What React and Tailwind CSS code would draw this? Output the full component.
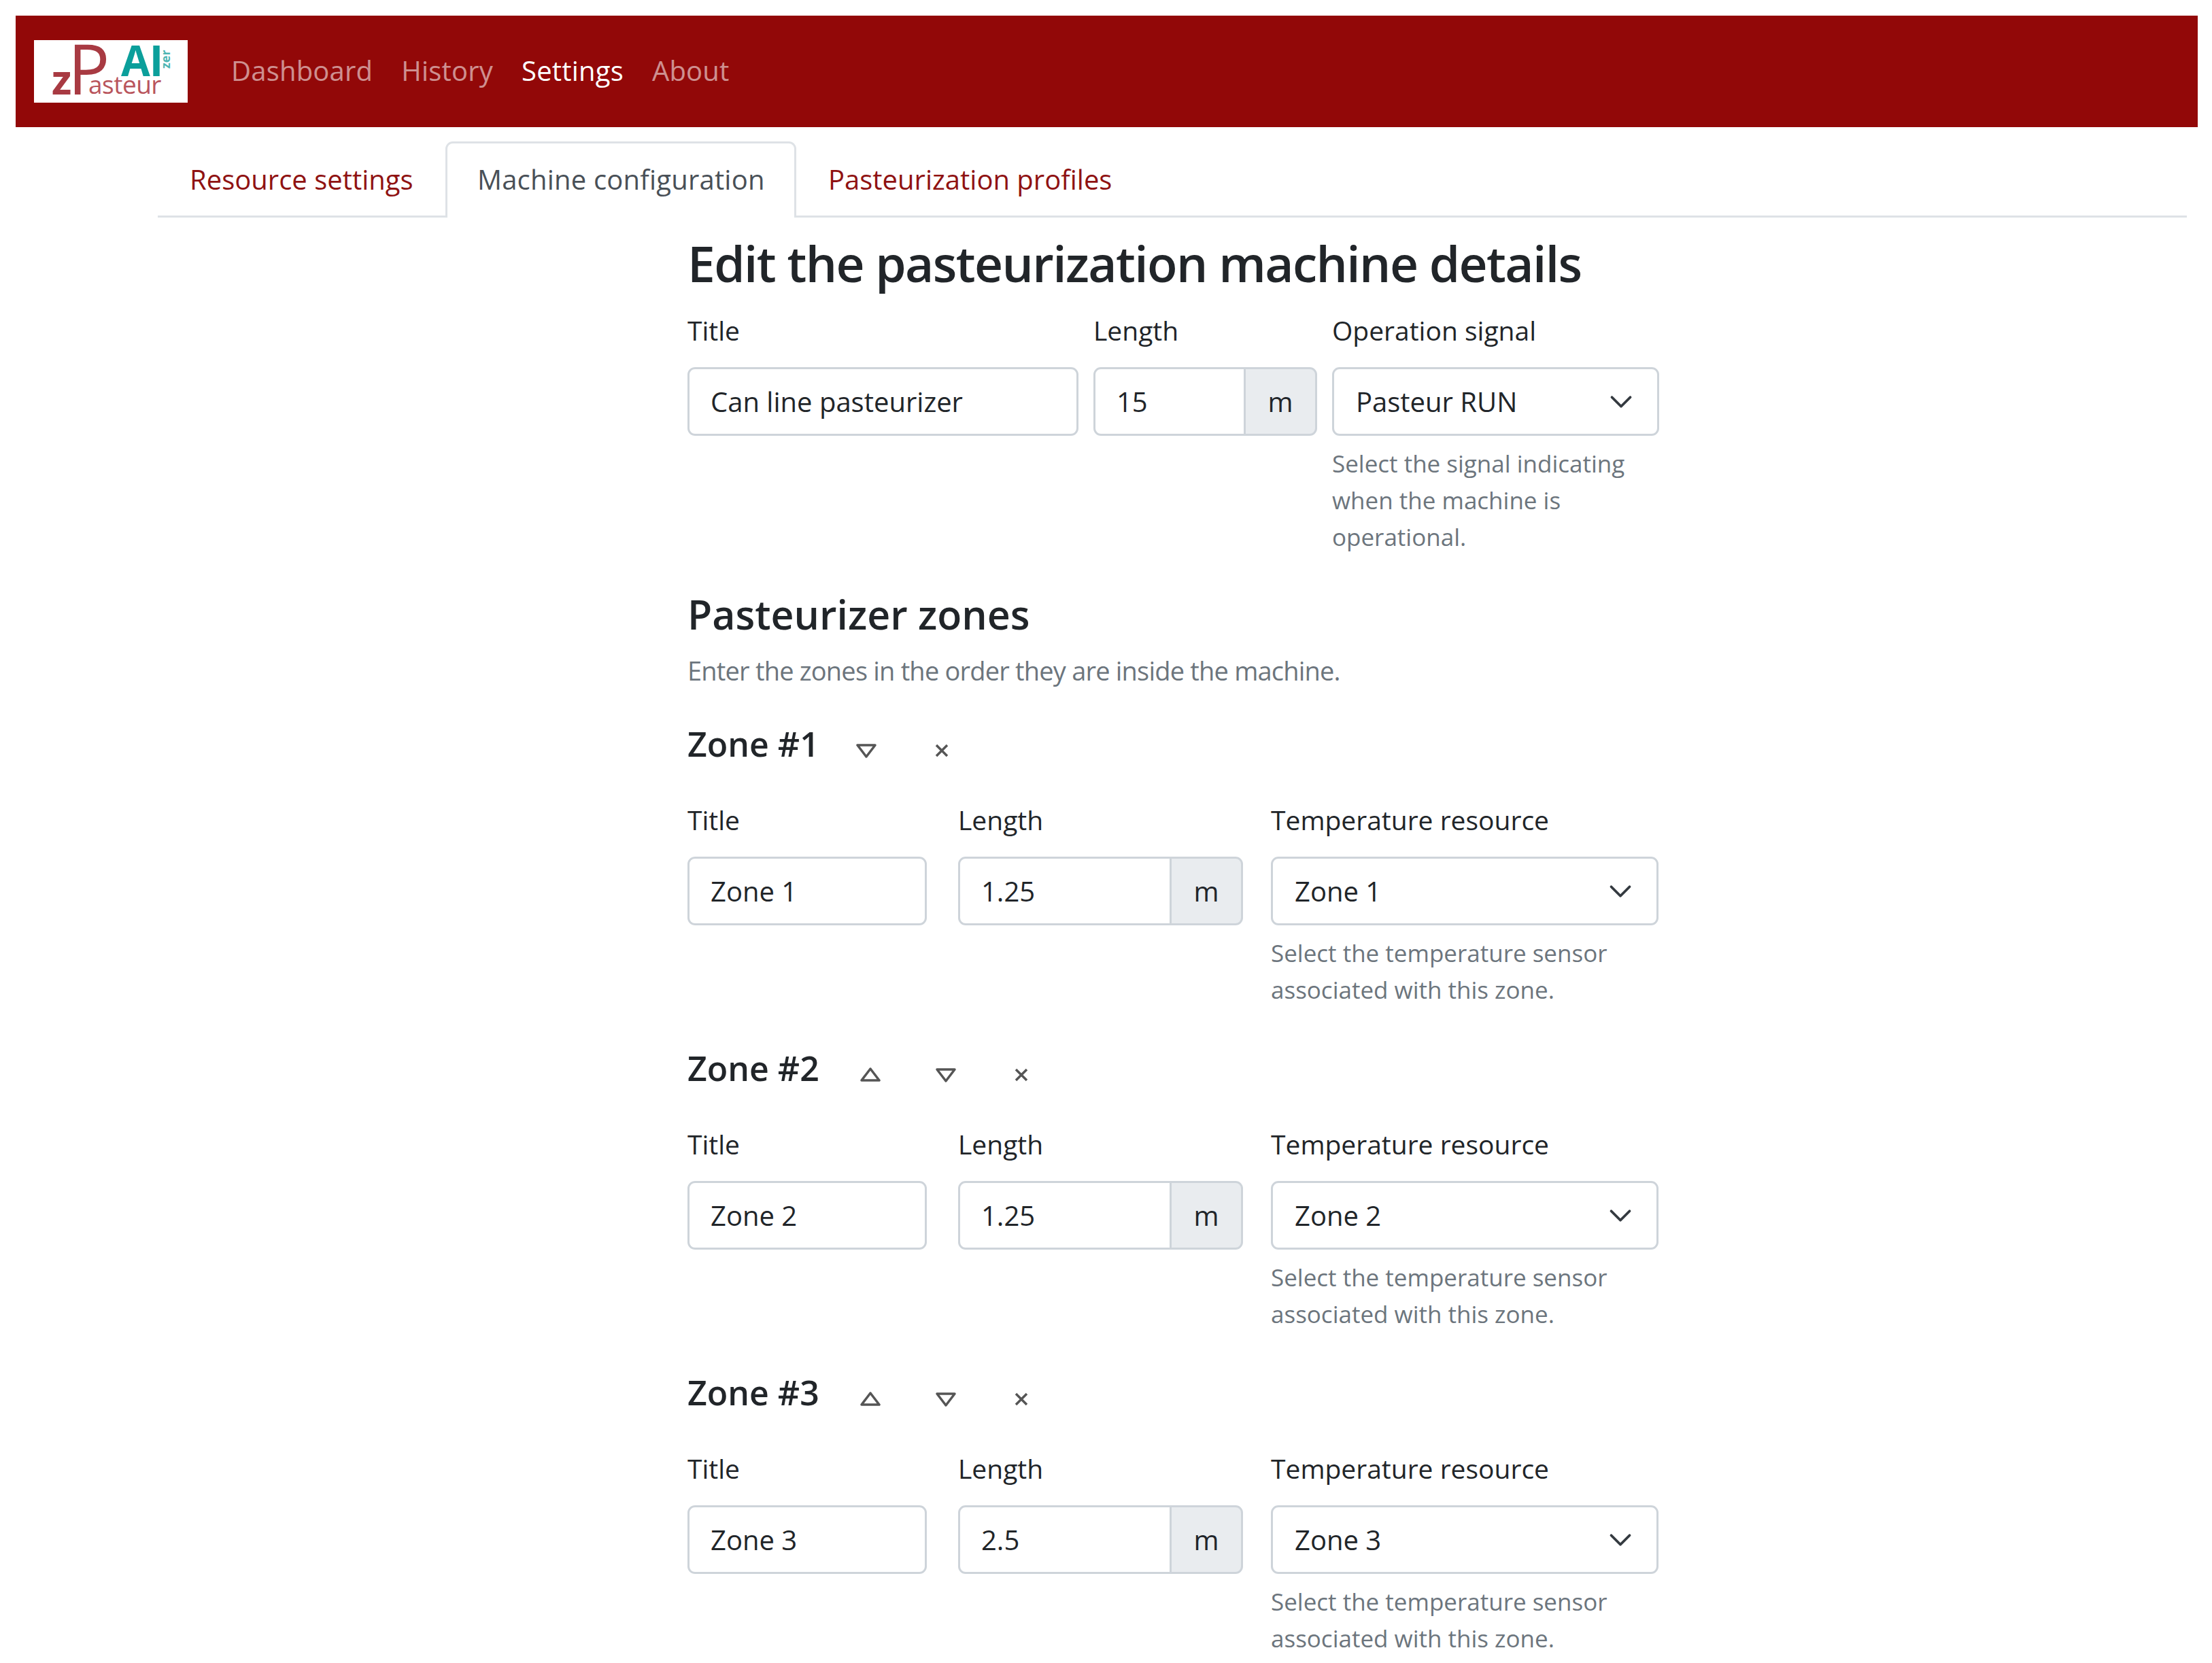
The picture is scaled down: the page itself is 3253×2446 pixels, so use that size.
import React from 'react';

const font = { fontFamily: '"Open Sans", sans-serif' };

const Chevron = () => (
    <svg viewBox="0 0 16 16" className="w-[36px] h-[36px] text-[#343a40]" fill="none" stroke="currentColor" strokeWidth="1.7" strokeLinecap="round" strokeLinejoin="round">
        <path d="m2 5 6 6 6-6" />
    </svg>
);

const TriangleUp = () => (
    <svg viewBox="0 0 32 24" className="w-[32px] h-[24px] text-[#555555]" fill="none" stroke="currentColor" strokeWidth="3.5" strokeLinejoin="round">
        <path d="M16 3 L29 20 H3 Z" />
    </svg>
);

const TriangleDown = () => (
    <svg viewBox="0 0 32 24" className="w-[32px] h-[24px] text-[#555555]" fill="none" stroke="currentColor" strokeWidth="3.5" strokeLinejoin="round">
        <path d="M3 4 H29 L16 21 Z" />
    </svg>
);

const Cross = () => (
    <svg viewBox="0 0 22 22" className="w-[22px] h-[22px] text-[#555555]" fill="none" stroke="currentColor" strokeWidth="3.5">
        <path d="M3 3 L19 19 M19 3 L3 19" />
    </svg>
);

const Label = ({ children }) => (
    <div className="h-[54px] leading-[54px] text-[#212529] text-[39px] mb-[27px] whitespace-nowrap">{children}</div>
);

const TextField = ({ value }) => (
    <div className="h-[101px] border-[3px] border-[#ced4da] rounded-[11px] px-[31px] flex items-center text-[40px] text-[#212529] whitespace-nowrap">
        {value}
    </div>
);

const LengthField = ({ value, addonWidth }) => (
    <div className="h-[101px] flex text-[40px] text-[#212529]">
        <div className="flex-1 border-[3px] border-[#ced4da] rounded-l-[11px] px-[31px] flex items-center">{value}</div>
        <div className={`${addonWidth} -ml-[3px] border-[3px] border-[#ced4da] bg-[#e9ecef] rounded-r-[11px] flex items-center justify-center`}>m</div>
    </div>
);

const SelectField = ({ value }) => (
    <div className="h-[101px] border-[3px] border-[#ced4da] rounded-[11px] pl-[32px] pr-[35px] flex items-center justify-between text-[40px] text-[#212529] whitespace-nowrap">
        {value}
        <Chevron />
    </div>
);

const Help = ({ children, className }) => (
    <div className={`mt-[14px] text-[35px] leading-[54px] text-[#6c757d] ${className}`}>{children}</div>
);

const zones = [
    { n: 1, title: 'Zone 1', length: '1.25', up: false, down: true },
    { n: 2, title: 'Zone 2', length: '1.25', up: true, down: true },
    { n: 3, title: 'Zone 3', length: '2.5', up: true, down: true },
];

const Zone = ({ zone }) => (
    <div>
        <div className="flex items-center h-[80px] mb-[45px]">
            <h3 className="text-[50px] font-semibold text-[#212529]">Zone #{zone.n}</h3>
            <div className={`flex mt-[20px] ${zone.up ? 'ml-[20px]' : 'ml-[14px]'}`}>
                {zone.up && <button className="w-[111px] flex justify-center"><TriangleUp /></button>}
                <button className="w-[111px] flex justify-center"><TriangleDown /></button>
                <button className="w-[111px] flex justify-center items-center"><Cross /></button>
            </div>
        </div>
        <div className="flex">
            <div className="w-[352px]">
                <Label>Title</Label>
                <TextField value={zone.title} />
            </div>
            <div className="w-[419px] ml-[46px]">
                <Label>Length</Label>
                <LengthField value={zone.length} addonWidth="w-[108px]" />
            </div>
            <div className="w-[570px] ml-[41px]">
                <Label>Temperature resource</Label>
                <SelectField value={zone.title} />
                <Help className="max-w-[520px]">Select the temperature sensor associated with this zone.</Help>
            </div>
        </div>
    </div>
);

const App = () => {
    return (
        <div className="min-h-screen bg-white pl-[23px] pr-[21px] pt-[23px]" style={font}>
            <nav className="h-[164px] bg-[#920808] flex items-center pl-[27px]">
                <div className="w-[226px] h-[92px] bg-white shrink-0">
                    <svg viewBox="0 0 226 92" className="w-full h-full">
                        <text x="26" y="80" fontSize="60" fontWeight="700" fill="#a83a42" fontFamily="Open Sans">z</text>
                        <text x="50" y="80" fontSize="102" fill="#a83a42" fontWeight="500" fontFamily="Open Sans">P</text>
                        <text x="80" y="79" fontSize="37" fill="#b9555c" fontFamily="Open Sans" letterSpacing="-0.5">asteur</text>
                        <text x="128" y="53" fontSize="62" fontWeight="700" fill="#0b9f9b" fontFamily="Open Sans" letterSpacing="-1">AI</text>
                        <text x="0" y="0" fontSize="18" fontWeight="700" fill="#4db5b2" fontFamily="Open Sans" transform="translate(200 42) rotate(-90)">zer</text>
                    </svg>
                </div>
                <div className="flex ml-[64px] gap-[42px] -mt-[2px] text-[40px] tracking-[0.2px] text-white/55">
                    <a>Dashboard</a>
                    <a>History</a>
                    <a className="text-white">Settings</a>
                    <a>About</a>
                </div>
            </nav>

            <div className="ml-[209px] mr-[16px] mt-[21px] h-[112px] border-b-[3px] border-[#dee2e6] flex items-end text-[40px] whitespace-nowrap">
                <a className="w-[423px] h-[109px] flex items-center pl-[47px] pt-[2px] text-[#8f1212]">Resource settings</a>
                <a className="w-[516px] h-[112px] -mb-[3px] flex items-center pl-[44px] pb-[4px] bg-white border-[3px] border-b-0 border-[#dee2e6] rounded-t-[11px] text-[#495057] tracking-[0.2px]">Machine configuration</a>
                <a className="h-[109px] flex items-center pl-[47px] pt-[2px] text-[#8f1212]">Pasteurization profiles</a>
            </div>

            <main className="ml-[988px] w-[1429px]">
                <h1 className="mt-[12px] h-[110px] flex items-center text-[73px] font-semibold text-[#212529] tracking-[-1.6px] whitespace-nowrap">Edit the pasteurization machine details</h1>
                <div className="flex mt-[17px]">
                    <div className="w-[575px]">
                        <Label>Title</Label>
                        <TextField value="Can line pasteurizer" />
                    </div>
                    <div className="w-[329px] ml-[22px]">
                        <Label>Length</Label>
                        <LengthField value="15" addonWidth="w-[108px]" />
                    </div>
                    <div className="w-[481px] ml-[22px]">
                        <Label>Operation signal</Label>
                        <SelectField value="Pasteur RUN" />
                        <Help className="max-w-[460px]">Select the signal indicating when the machine is operational.</Help>
                    </div>
                </div>
                <h2 className="mt-[46px] h-[80px] leading-[80px] text-[59px] font-semibold text-[#212529]">Pasteurizer zones</h2>
                <p className="mt-[16px] h-[54px] leading-[54px] text-[38px] text-[#6c757d] tracking-[-0.8px] font-medium">Enter the zones in the order they are inside the machine.</p>
                <div className="mt-[41px] flex flex-col gap-[48px]">
                    {zones.map((zone) => (
                        <Zone key={zone.n} zone={zone} />
                    ))}
                </div>
            </main>
        </div>
    );
};

export default App;
